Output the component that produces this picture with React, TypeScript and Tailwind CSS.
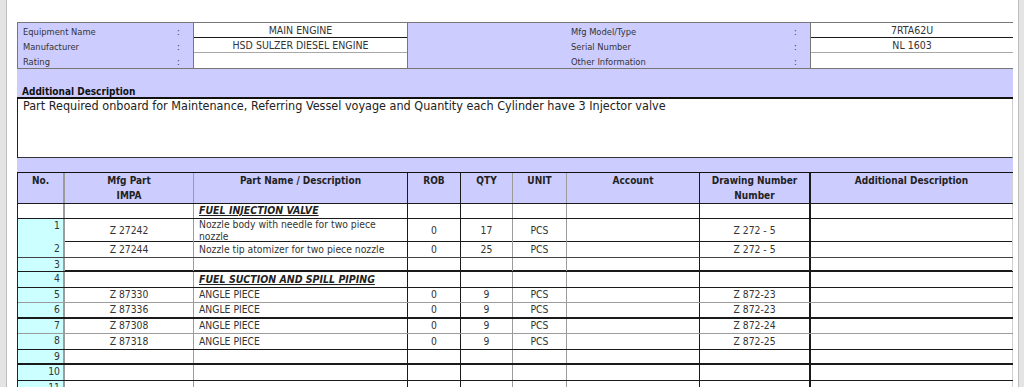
import React from "react";

const COLS = "grid grid-cols-[47px_129px_214px_53px_52px_54px_133px_111px_202px]";
const GRAY = "border-[#9c9c9c]";
const DARK = "border-[#1a1a1a]";
const RB = [
  `border-r-2 ${GRAY}`,
  `border-r ${GRAY}`,
  `border-r ${DARK}`,
  `border-r ${DARK}`,
  `border-r ${GRAY}`,
  `border-r ${GRAY}`,
  `border-r ${DARK}`,
  `border-r-2 ${DARK}`,
  "border-r border-[#d0d0d0]",
];

type Row = {
  no?: string;
  impa?: string;
  desc?: string;
  section?: boolean;
  rob?: string;
  qty?: string;
  unit?: string;
  dwg?: string;
  h: string;
  b: string;
};

const rows: Row[] = [
  { desc: "FUEL INJECTION VALVE", section: true, h: "h-[15px]", b: `border-b ${DARK}` },
  { no: "1", impa: "Z 27242", desc: "Nozzle body with needle for two piece nozzle", rob: "0", qty: "17", unit: "PCS", dwg: "Z 272 - 5", h: "h-[23px]", b: `border-b ${DARK}` },
  { no: "2", impa: "Z 27244", desc: "Nozzle tip atomizer for two piece nozzle", rob: "0", qty: "25", unit: "PCS", dwg: "Z 272 - 5", h: "h-[16px]", b: "border-b border-[#444]" },
  { no: "3", h: "h-[14px]", b: `border-b-2 ${DARK}` },
  { no: "4", desc: "FUEL SUCTION AND SPILL PIPING", section: true, h: "h-[16px]", b: `border-b ${DARK}` },
  { no: "5", impa: "Z 87330", desc: "ANGLE PIECE", rob: "0", qty: "9", unit: "PCS", dwg: "Z 872-23", h: "h-[15px]", b: `border-b ${GRAY}` },
  { no: "6", impa: "Z 87336", desc: "ANGLE PIECE", rob: "0", qty: "9", unit: "PCS", dwg: "Z 872-23", h: "h-[16px]", b: `border-b-2 ${DARK}` },
  { no: "7", impa: "Z 87308", desc: "ANGLE PIECE", rob: "0", qty: "9", unit: "PCS", dwg: "Z 872-24", h: "h-[15px]", b: `border-b ${GRAY}` },
  { no: "8", impa: "Z 87318", desc: "ANGLE PIECE", rob: "0", qty: "9", unit: "PCS", dwg: "Z 872-25", h: "h-[16px]", b: `border-b ${DARK}` },
  { no: "9", h: "h-[15px]", b: `border-b-2 ${DARK}` },
  { no: "10", h: "h-[16px]", b: `border-b ${DARK}` },
  { no: "11", h: "h-[16px]", b: `border-b ${DARK}` },
];

const headers = [
  ["No."],
  ["Mfg Part", "IMPA"],
  ["Part Name / Description"],
  ["ROB"],
  ["QTY"],
  ["UNIT"],
  ["Account"],
  ["Drawing Number", "Number"],
  ["Additional Description"],
];

function InfoLabels({ items, left, width }: { items: string[]; left: string; width: string }) {
  return (
    <div className={`flex flex-col bg-[#ccccff] ${left}`}>
      {items.map((t) => (
        <div key={t} className="h-[15px] flex items-end text-[9.3px] leading-[12px] text-[#333]">
          <span className={width}>{t}</span>
          <span>:</span>
        </div>
      ))}
    </div>
  );
}

function InfoValues({ items }: { items: string[] }) {
  const borders = [`border-b ${DARK}`, "border-b border-[#a8a8a8]", ""];
  return (
    <div className="flex flex-col bg-white border-l border-[#777]">
      {items.map((t, i) => (
        <div
          key={i}
          className={`h-[15px] flex justify-center items-start pt-[1px] text-[10.5px] leading-[13px] text-[#333] ${borders[i]}`}
        >
          {t}
        </div>
      ))}
    </div>
  );
}

export default function App() {
  return (
    <div className="flex w-[1024px] h-[387px] overflow-hidden bg-white text-[#222] font-['DejaVu_Sans_Condensed','Liberation_Sans',sans-serif]">
      <div className="w-[7px] shrink-0 bg-[#e4e4e4] border-r border-[#bdbdbd]" />
      <div className="flex-1 pl-[10px] pr-[5px] pt-[22px]">
        {/* equipment info */}
        <div className="w-[996px] grid grid-cols-[175px_215px_402px_203px] border-t border-b border-l border-[#777]">
          <InfoLabels items={["Equipment Name", "Manufacturer", "Rating"]} left="pl-[5px]" width="w-[154px]" />
          <div className="border-r border-[#777]">
            <InfoValues items={["MAIN ENGINE", "HSD SULZER DIESEL ENGINE", ""]} />
          </div>
          <InfoLabels items={["Mfg Model/Type", "Serial Number", "Other Information"]} left="pl-[163px]" width="w-[223px]" />
          <InfoValues items={["7RTA62U", "NL 1603", ""]} />
        </div>

        <div className="w-[996px] h-[30px] bg-[#ccccff] border-b-2 border-[#111] flex items-end pl-[5px]">
          <span className="text-[10px] font-bold leading-[11px] text-[#111]">Additional Description</span>
        </div>
        <div className="w-[996px] h-[59px] bg-white border-l border-r border-b border-l-[#222] border-r-[#cfcfcf] border-b-[#333] pl-[5px]">
          <p className="text-[12.5px] leading-[14px] text-[#222]">
            Part Required onboard for Maintenance, Referring Vessel voyage and Quantity each Cylinder have 3 Injector valve
          </p>
        </div>
        <div className="w-[996px] h-[15px] bg-[#ccccff] border-b border-[#111]" />

        {/* parts table */}
        <div className="w-[996px] border-l border-[#222]">
          <div className={`${COLS} h-[31px] bg-[#ccccff] border-b ${DARK}`}>
            {headers.map((h, i) => (
              <div key={i} className={`${RB[i]} text-center text-[10px] font-bold leading-[15px] text-[#222]`}>
                {h.map((l) => (
                  <div key={l}>{l}</div>
                ))}
              </div>
            ))}
          </div>

          {rows.map((r, idx) => (
            <div key={idx} className={`${COLS} ${r.h} ${r.b} text-[10.3px] leading-[11.5px] text-[#333]`}>
              <div className={`${RB[0]} ${r.no ? "bg-[#ccffff]" : "bg-white"} text-right pr-[3px] pt-[1px]`}>{r.no}</div>
              <div className={`${RB[1]} flex items-center justify-center`}>{r.impa}</div>
              <div className={`${RB[2]} flex items-center pl-[5px]`}>
                {r.section ? (
                  <span className="font-bold italic underline text-[10.5px] text-[#222]">{r.desc}</span>
                ) : (
                  <span className="max-w-[190px]">{r.desc}</span>
                )}
              </div>
              <div className={`${RB[3]} flex items-center justify-center`}>{r.rob}</div>
              <div className={`${RB[4]} flex items-center justify-center`}>{r.qty}</div>
              <div className={`${RB[5]} flex items-center justify-center`}>{r.unit}</div>
              <div className={RB[6]} />
              <div className={`${RB[7]} flex items-center justify-center`}>{r.dwg}</div>
              <div className={RB[8]} />
            </div>
          ))}
        </div>
      </div>
      <div className="w-[6px] shrink-0 bg-[#e4e4e4] border-l border-[#bdbdbd]" />
    </div>
  );
}
